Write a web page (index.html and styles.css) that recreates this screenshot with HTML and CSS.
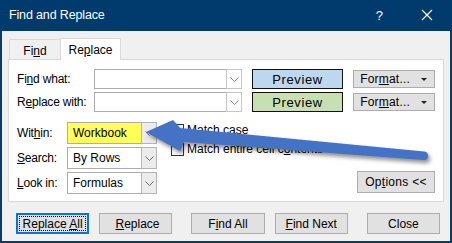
FILE: index.html
```html
<!DOCTYPE html>
<html>
<head>
    <meta charset="utf-8">
    <title>Find and Replace</title>
    <link rel="stylesheet" href="styles.css">
</head>
<body>
    <div class="window">
        <div class="titlebar">
            <span class="title">Find and Replace</span>
            <span class="help">?</span>
            <svg class="close" width="12" height="12" viewBox="0 0 12 12"><path d="M1 1 L11 11 M11 1 L1 11" stroke="#fff" stroke-width="1.2" fill="none"/></svg>
        </div>
        <div class="content">
            <div class="tabs">
                <div class="tab">Fi<u>n</u>d</div>
                <div class="tab active">Re<u>p</u>lace</div>
            </div>
            <div class="panel">
                <div class="row">
                    <span class="lbl">Fi<u>n</u>d what:</span>
                    <div class="combo wide">
                        <span class="text"></span>
                        <span class="drop"><svg width="9" height="5" viewBox="0 0 9 5"><path d="M0.5 0.5 L4.5 4.5 L8.5 0.5" stroke="#8a8a8a" fill="none"/></svg></span>
                    </div>
                    <div class="preview blue">Preview</div>
                    <button class="btn format">For<u>m</u>at... <span class="caret"></span></button>
                </div>
                <div class="row second">
                    <span class="lbl">R<u>e</u>place with:</span>
                    <div class="combo wide">
                        <span class="text"></span>
                        <span class="drop"><svg width="9" height="5" viewBox="0 0 9 5"><path d="M0.5 0.5 L4.5 4.5 L8.5 0.5" stroke="#8a8a8a" fill="none"/></svg></span>
                    </div>
                    <div class="preview green">Preview</div>
                    <button class="btn format">For<u>m</u>at... <span class="caret"></span></button>
                </div>
                <div class="lower">
                    <div class="selects">
                        <div class="srow">
                            <span class="lbl short">Wit<u>h</u>in:</span>
                            <div class="combo narrow">
                                <span class="text yellow">Workbook</span>
                                <span class="drop gray"><svg width="9" height="5" viewBox="0 0 9 5"><path d="M0.5 0.5 L4.5 4.5 L8.5 0.5" stroke="#6d6d6d" fill="none"/></svg></span>
                            </div>
                        </div>
                        <div class="srow">
                            <span class="lbl short"><u>S</u>earch:</span>
                            <div class="combo narrow">
                                <span class="text">By Rows</span>
                                <span class="drop gray"><svg width="9" height="5" viewBox="0 0 9 5"><path d="M0.5 0.5 L4.5 4.5 L8.5 0.5" stroke="#6d6d6d" fill="none"/></svg></span>
                            </div>
                        </div>
                        <div class="srow">
                            <span class="lbl short"><u>L</u>ook in:</span>
                            <div class="combo narrow">
                                <span class="text">Formulas</span>
                                <span class="drop gray"><svg width="9" height="5" viewBox="0 0 9 5"><path d="M0.5 0.5 L4.5 4.5 L8.5 0.5" stroke="#6d6d6d" fill="none"/></svg></span>
                            </div>
                        </div>
                    </div>
                    <div class="checks">
                        <label class="check"><span class="box"></span>Match case</label>
                        <label class="check"><span class="box"></span>Match entire cell c<u>o</u>ntents</label>
                    </div>
                    <button class="btn options">Op<u>t</u>ions &lt;&lt;</button>
                </div>
            </div>
            <div class="actions">
                <button class="btn action default">Replace <u>A</u>ll</button>
                <button class="btn action">&nbsp;<u>R</u>eplace</button>
                <button class="btn action group">F<u>i</u>nd All</button>
                <button class="btn action"><u>F</u>ind Next</button>
                <button class="btn action group">Close</button>
            </div>
        </div>
    </div>
    <svg class="arrow" width="452" height="243" viewBox="0 0 452 243">
        <path d="M146 132 L173 120 L180 128 L424 151.5 A4.25 4.25 0 0 1 424 160 L184 142 L180 151 Z" fill="#4472c4"/>
    </svg>
</body>
</html>
```

FILE: styles.css
```css
* {
    box-sizing: border-box;
}
body {
    margin: 0;
    position: relative;
    width: 452px;
    height: 243px;
    font-family: "Liberation Sans", Arial, sans-serif;
    font-size: 12px;
    color: #000;
}
.window {
    width: 452px;
    height: 243px;
    border: 2px solid #0d3b68;
    border-top: 0;
    background-color: #f0f0f0;
}
.titlebar {
    height: 31px;
    margin: 0 -2px;
    background-color: #013a6d;
    color: #fff;
    display: flex;
    align-items: center;
    padding-left: 9px;
}
.title {
    font-size: 12.5px;
    letter-spacing: -0.15px;
    margin-top: -1px;
}
.help {
    margin-left: auto;
    font-size: 13px;
    margin-right: 38px;
    margin-top: -1px;
}
.close {
    margin-right: 19px;
    margin-top: -1px;
}
.content {
    padding: 7px 0 0 6px;
}
.tabs {
    display: flex;
    height: 21px;
    align-items: flex-end;
}
.tab {
    height: 20px;
    width: 52px;
    margin-left: 1px;
    border: 1px solid #d9d9d9;
    border-bottom: 0;
    display: flex;
    align-items: center;
    justify-content: center;
    padding-top: 3px;
}
.tab.active {
    width: 61px;
    height: 22px;
    margin-left: -1px;
    margin-bottom: -1px;
    background-color: #fff;
    position: relative;
    z-index: 1;
    padding-top: 1px;
}
.panel {
    width: 436px;
    height: 143px;
    background-color: #fff;
    border: 1px solid #d9d9d9;
    padding: 9px 8px 7px 8px;
}
.row {
    display: flex;
    align-items: center;
    height: 20px;
}
.row.second {
    margin-top: 3px;
}
.lbl {
    width: 77px;
    letter-spacing: -0.2px;
}
.lbl.short {
    width: 50px;
}
.combo {
    display: flex;
    height: 20px;
}
.combo.wide {
    width: 148px;
}
.combo.narrow {
    width: 90px;
    height: 22px;
}
.combo .text {
    flex: 1;
    border: 1px solid #acacac;
    border-right: 0;
    background-color: #fff;
    padding-left: 5px;
    display: flex;
    align-items: center;
}
.combo .text.yellow {
    background-color: #ffff57;
}
.drop {
    width: 16px;
    border: 1px solid #c6c6c6;
    display: flex;
    align-items: center;
    justify-content: center;
    background-color: #fff;
}
.drop.gray {
    background-color: #ececec;
    border-color: #b5b5b5;
}
.preview {
    width: 91px;
    height: 20px;
    margin-left: 10px;
    border: 1px solid #111;
    display: flex;
    align-items: center;
    justify-content: center;
    font-size: 13px;
    letter-spacing: 0.6px;
}
.preview.blue {
    background-color: #bdd7ee;
}
.preview.green {
    background-color: #c6e0b4;
}
.btn {
    font-family: "Liberation Sans", Arial, sans-serif;
    font-size: 12px;
    color: #000;
    background-color: #e1e1e1;
    border: 1px solid #adadad;
    padding: 0;
}
.format {
    width: 82px;
    height: 18px;
    margin-left: 10px;
    display: flex;
    align-items: center;
    justify-content: flex-end;
    padding-right: 7px;
    letter-spacing: 0.2px;
}
.caret {
    display: inline-block;
    margin-left: 11px;
    border-left: 3px solid transparent;
    border-right: 3px solid transparent;
    border-top: 3px solid #222;
}
.lower {
    display: flex;
    margin-top: 10px;
}
.selects {
    display: flex;
    flex-direction: column;
    gap: 3px;
}
.srow {
    display: flex;
    align-items: center;
}
.checks {
    margin-left: 14px;
    margin-top: -1px;
}
.check {
    display: flex;
    align-items: center;
    height: 18px;
}
.check + .check {
    margin-top: 1px;
}
.box {
    width: 13px;
    height: 13px;
    border: 1px solid #333;
    background-color: #fff;
    margin-right: 3px;
}
.options {
    margin-left: auto;
    align-self: flex-end;
    width: 78px;
    height: 22px;
    margin-bottom: 1px;
    letter-spacing: 0.3px;
}
.actions {
    display: flex;
    margin-top: 11px;
    padding-left: 8px;
}
.action {
    width: 74px;
    height: 21px;
    margin-right: 10px;
}
.action.group {
    margin-left: 9px;
}
.action.default {
    border: 2px solid #0078d7;
    outline: 1px dotted #000;
    outline-offset: -4px;
}
.arrow {
    position: absolute;
    left: 0;
    top: 0;
    pointer-events: none;
    filter: drop-shadow(2px 3px 2px rgba(0, 0, 0, 0.45));
}
```
